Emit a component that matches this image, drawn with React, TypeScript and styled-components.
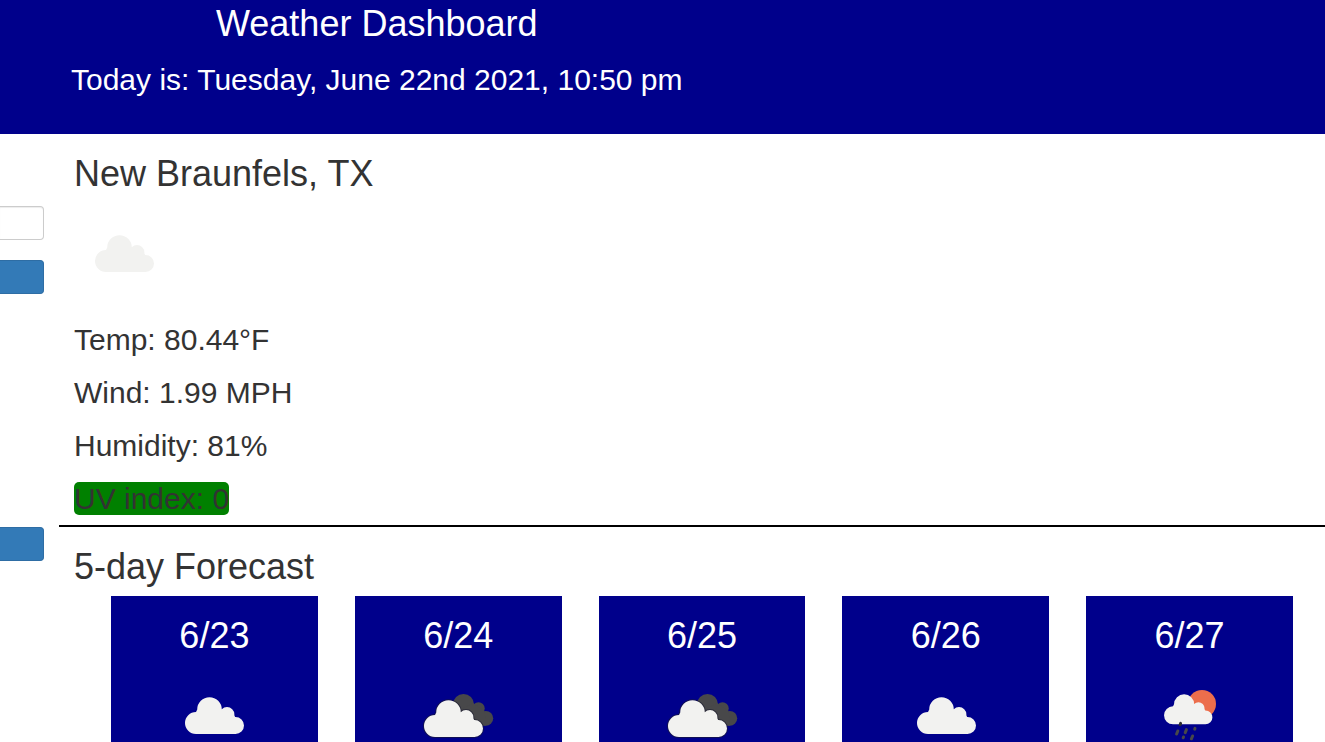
import React from "react";
import styled, { createGlobalStyle } from "styled-components";

const GlobalStyle = createGlobalStyle`
  *, *::before, *::after { box-sizing: border-box; }
  body {
    margin: 0;
    background: #fff;
    color: #333;
    font-family: Arial, "Liberation Sans", Helvetica, sans-serif;
  }
`;

const Page = styled.div`
  display: flex;
  flex-direction: column;
  height: 100vh;
  overflow: hidden;
`;

const Header = styled.header`
  display: flex;
  flex: none;
  padding: 4px 71px 38px;
  background: #00008b;
  color: #fff;
`;

const HeaderText = styled.div`
  text-align: center;
`;

const Title = styled.h1`
  margin: 0;
  font-size: 36px;
  font-weight: 400;
  line-height: 40px;
`;

const SectionTitle = styled.h2`
  margin: 0 0 ${(p: { $gap: number }) => p.$gap}px;
  font-size: 36px;
  font-weight: 400;
  line-height: 40px;
`;

const Today = styled.p`
  margin: 19px 0 0;
  font-size: 30px;
  line-height: 33px;
`;

const Body = styled.div`
  display: flex;
  flex: none;
`;

const Sidebar = styled.aside`
  flex: none;
  width: 59px;
  padding: 72px 15px 0 0;
`;

const SearchForm = styled.form`
  display: grid;
  gap: 20px;
`;

const SearchInput = styled.input`
  width: 100%;
  height: 34px;
  border: 1px solid #ccc;
  border-left: 0;
  border-radius: 0 4px 4px 0;
  background: #fff;
  box-shadow: inset 0 1px 1px rgba(0, 0, 0, 0.075);
`;

const Button = styled.button`
  display: block;
  width: 100%;
  height: 34px;
  border: 1px solid #2e6da4;
  border-left: 0;
  border-radius: 0 4px 4px 0;
  background: #337ab7;
`;

const History = styled.div`
  margin-top: 233px;
`;

const Main = styled.main`
  flex: 1;
  min-width: 0;
`;

const Current = styled.section`
  padding: 20px 15px 10px;
  border-bottom: 2px solid #000;
`;

const Readings = styled.ul`
  display: grid;
  justify-items: start;
  gap: 20px;
  margin: 19px 0 0;
  padding: 0;
  list-style: none;
`;

const Reading = styled.li`
  font-size: 30px;
  line-height: 33px;
`;

const UvReading = styled(Reading)`
  border-radius: 5px;
  background: #008000;
`;

const Forecast = styled.section`
  padding: 20px 32px 0 15px;
`;

const Cards = styled.div`
  display: grid;
  grid-template-columns: repeat(5, 1fr);
  gap: 37px;
  padding-left: 37px;
`;

const Card = styled.article`
  display: flex;
  flex-direction: column;
  align-items: center;
  gap: 10px;
  padding: 20px 0;
  background: #00008b;
  color: #fff;
`;

const Day = styled.h3`
  margin: 0;
  font-size: 36px;
  font-weight: 400;
  line-height: 40px;
`;

const WeatherIcon = styled.svg`
  display: block;
  width: 100px;
  height: 100px;
`;

type Sky = "cloudy" | "overcast" | "rain";

// Four puffs and the body that joins them, all wound the same way.
const CLOUD = [
  "M21 57a11 11 0 0 1 22 0a11 11 0 0 1 -22 0Z",
  "M33.2 43.5a12.3 12.3 0 0 1 24.6 0a12.3 12.3 0 0 1 -24.6 0Z",
  "M55.6 48.5a7.4 7.4 0 0 1 14.8 0a7.4 7.4 0 0 1 -14.8 0Z",
  "M63 59.5a8.5 8.5 0 0 1 17 0a8.5 8.5 0 0 1 -17 0Z",
  "M32 46L33.5 43L57.5 43L70.3 49L71.5 52V68H32Z",
].join("");

function SkyIcon({ sky }: { sky: Sky }) {
  return (
    <WeatherIcon viewBox="0 0 100 100" role="img" aria-label={sky}>
      {sky === "cloudy" && <path d={CLOUD} fill="#f2f2f0" />}
      {sky === "overcast" && (
        <>
          <g fill="#48484a">
            <circle cx="55.5" cy="38.5" r="10.5" />
            <circle cx="70.5" cy="42.5" r="6.2" />
            <circle cx="77.8" cy="52.3" r="7.4" />
            <path d="M50 45L65 37L76.5 45L78 59.7H64Z" />
          </g>
          <path
            d={CLOUD}
            transform="translate(-5 3)"
            fill="#f2f2f0"
            stroke="#1c1c30"
            strokeWidth="2"
            paintOrder="stroke"
            strokeOpacity="0.6"
          />
        </>
      )}
      {sky === "rain" && (
        <>
          <circle cx="62" cy="38" r="14" fill="#ec6e4c" />
          <path d={CLOUD} transform="translate(6.8 2.6) scale(.82)" fill="#f2f2f0" />
          <g stroke="#48484a" strokeWidth="3" strokeLinecap="round">
            <path d="M40.6 57.4L40.2 58.6" stroke="#2e2e30" />
            <path d="M37.8 65L36.6 68" />
            <path d="M46.4 63.6L45.2 66.6" />
            <path d="M55 62.4L54.7 63.2" />
            <path d="M43.5 71L43.2 71.8" />
            <path d="M52.6 70L51.4 72.8" />
          </g>
        </>
      )}
    </WeatherIcon>
  );
}

const days: { date: string; sky: Sky }[] = [
  { date: "6/23", sky: "cloudy" },
  { date: "6/24", sky: "overcast" },
  { date: "6/25", sky: "overcast" },
  { date: "6/26", sky: "cloudy" },
  { date: "6/27", sky: "rain" },
];

export default function App() {
  return (
    <>
      <GlobalStyle />
      <Page>
        <Header>
          <HeaderText>
            <Title>Weather Dashboard</Title>
            <Today>Today is: Tuesday, June 22nd 2021, 10:50 pm</Today>
          </HeaderText>
        </Header>
        <Body>
          <Sidebar>
            <SearchForm onSubmit={(e) => e.preventDefault()}>
              <SearchInput type="text" aria-label="City" />
              <Button type="submit" aria-label="Search" />
            </SearchForm>
            <History>
              <Button type="button" aria-label="Clear history" />
            </History>
          </Sidebar>
          <Main>
            <Current>
              <SectionTitle $gap={10}>New Braunfels, TX</SectionTitle>
              <SkyIcon sky="cloudy" />
              <Readings>
                <Reading>Temp: 80.44°F</Reading>
                <Reading>Wind: 1.99 MPH</Reading>
                <Reading>Humidity: 81%</Reading>
                <UvReading>UV index: 0</UvReading>
              </Readings>
            </Current>
            <Forecast>
              <SectionTitle $gap={9}>5-day Forecast</SectionTitle>
              <Cards>
                {days.map((day) => (
                  <Card key={day.date}>
                    <Day>{day.date}</Day>
                    <SkyIcon sky={day.sky} />
                  </Card>
                ))}
              </Cards>
            </Forecast>
          </Main>
        </Body>
      </Page>
    </>
  );
}
